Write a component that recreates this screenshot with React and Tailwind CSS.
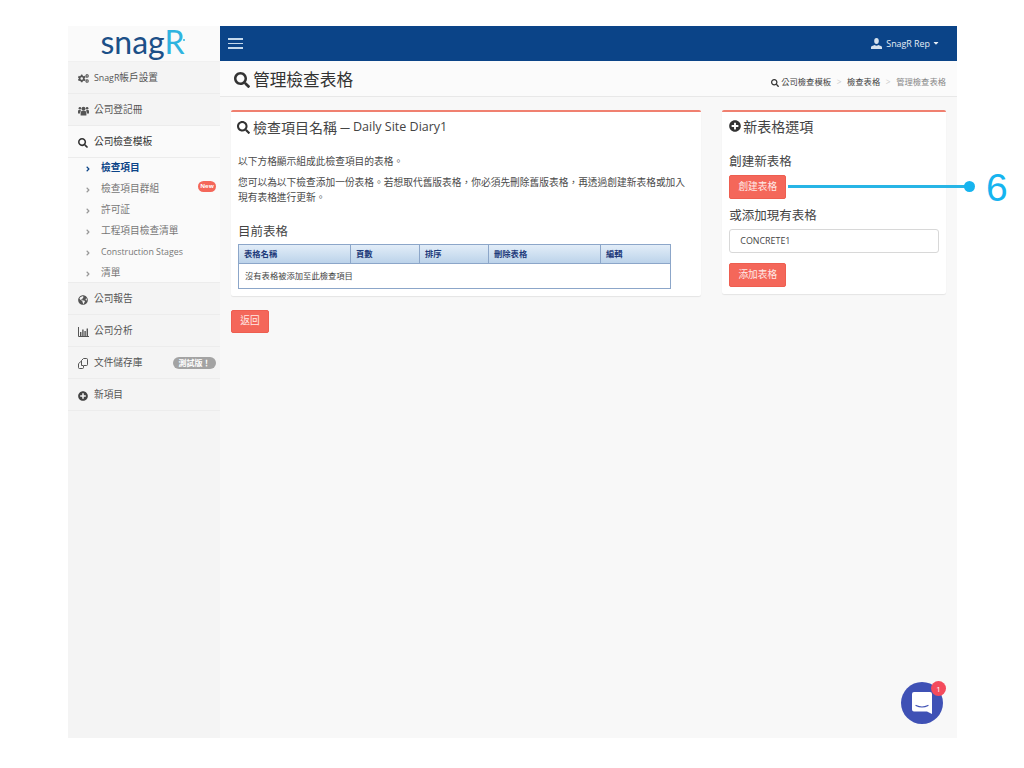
import React from "react";
import { FaCogs, FaSearch, FaGlobeAmericas, FaPlusCircle, FaCaretDown, FaAngleRight } from "react-icons/fa";

const font = { fontFamily: '"Open Sans", "Noto Sans CJK TC", sans-serif' };

const ChartIcon = () => (
  <svg width="11" height="10" viewBox="0 0 11 10" className="text-[#555]">
    <path d="M0.5 0v9.500H11" fill="none" stroke="currentColor" />
    <path d="M2 5h1.400v4H2zM4.200 2.500h1.400V9H4.200zM6.400 4h1.400v5H6.400zM8.600 1.500H10V9H8.600z" fill="currentColor" />
  </svg>
);

const CopyIcon = () => (
  <svg width="10" height="11" viewBox="0 0 10 11" fill="none" stroke="#555" strokeWidth="1">
    <path d="M3.500 3 1 5.200a.8.8 0 0 0-.5.700v3.800c0 .4.300.8.800.8h3.400c.4 0 .8-.4.800-.8V8" />
    <path d="M3.500 7.500V2.500L5.500.5h3.200c.4 0 .8.400.8.800v5.400c0 .4-.4.800-.8.800H6" />
    <path d="M3.500 7.500h2.200" />
  </svg>
);

const UsersIcon = () => (
  <svg width="11" height="10" viewBox="0 0 11 10" fill="#555">
    <circle cx="5.500" cy="2.800" r="2" />
    <path d="M2.600 9.500V6.800c0-1 .8-1.700 1.700-1.700h2.400c.9 0 1.700.7 1.700 1.700v2.700z" />
    <circle cx="1.900" cy="2.300" r="1.300" />
    <circle cx="9.100" cy="2.300" r="1.300" />
    <path d="M0 7.500V5.200c0-.8.500-1.300 1.200-1.300h1.300c.1.500.4.900.8 1.200-.8.300-1.300 1-1.300 1.800v.6z" />
    <path d="M11 7.500V5.200c0-.8-.5-1.300-1.200-1.300H8.500c-.1.500-.4.900-.8 1.200.8.300 1.300 1 1.300 1.800v.6z" />
  </svg>
);

const UserIcon = () => (
  <svg width="11" height="11" viewBox="0 0 11 11" fill="#d6e2ee">
    <ellipse cx="5.500" cy="3" rx="2.300" ry="3" />
    <path d="M0 11V9.300c0-.7.500-1.100 1.100-1.300l2.600-1c.500.500 1.100.8 1.800.8s1.300-.3 1.800-.8l2.600 1c.6.200 1.100.6 1.100 1.300V11z" />
  </svg>
);

const SideRow = ({ icon, label, latin, badge, active }) => (
  <div className={`h-8 flex items-center pt-[2px] pl-[10px] pr-1 border-b border-[#ececec] text-[9.700px] ${active ? "bg-[#fafafa] text-[#333]" : "text-[#555]"}`}>
    <span className="w-[16px] flex justify-start">{icon}</span>
    {latin && <span className="text-[8.800px]">{latin}</span>}
    <span>{label}</span>
    {badge && (
      <span className="ml-auto -mt-[2px] bg-[#a3a3a3] text-white text-[8px] font-bold rounded-full h-[12px] w-[43px] flex items-center justify-center">
        {badge}
      </span>
    )}
  </div>
);

const SubRow = ({ label, latin, active, isNew }) => (
  <div className={`h-[21px] flex items-center pt-[2px] pl-[16px] text-[9.700px] ${active ? "text-[#0b4488] font-bold" : "text-[#777]"}`}>
    <span className="w-[17px]">
      <FaAngleRight size={8} className={active ? "text-[#0b4488]" : "text-[#999]"} />
    </span>
    <span className={latin ? "text-[8.800px]" : ""}>{label}</span>
    {isNew && (
      <span className="ml-auto mr-1 bg-[#f4675a] text-white text-[6px] font-bold rounded-full w-[18px] h-[11px] -mt-[6px] flex items-center justify-center">
        New
      </span>
    )}
  </div>
);

const RedButton = ({ label, className = "" }) => (
  <button className={`bg-[#f4675a] text-[#ffe9e6] text-[9.700px] rounded-[2px] border border-[#ee5e50] flex items-center justify-center ${className}`}>
    {label}
  </button>
);

const columns = [
  { label: "表格名稱", w: "w-[112px]" },
  { label: "頁數", w: "w-[69px]" },
  { label: "排序", w: "w-[69px]" },
  { label: "刪除表格", w: "w-[112px]" },
  { label: "編輯", w: "flex-1" },
];

export default function App() {
  return (
    <div style={font} className="relative w-[1024px] h-[768px] bg-white overflow-hidden pt-[26px] pl-[68px]">
      <div className="w-[889px] h-[712px] flex bg-[#f8f8f8]">
        <aside className="w-[152px] shrink-0 bg-[#f4f4f4]">
          <div className="h-[36px] bg-[#fafafa] flex items-center justify-center pb-[4px] pr-[2px] border-b border-[#f0f0f0]">
            <span className="text-[32px] leading-none text-[#1c5088]" style={{ fontFamily: '"Lato", sans-serif' }}>
              snag<span className="text-[#2fb4e0]">R</span>
            </span>
            <span className="w-[2px] h-[2px] rounded-full bg-[#2fb4e0] -ml-px mb-[3px]" />
          </div>
          <SideRow icon={<FaCogs size={11} color="#555" />} latin="SnagR" label="帳戶設置" />
          <SideRow icon={<UsersIcon />} label="公司登記冊" />
          <div className="border-b border-[#ececec] bg-[#fafafa]">
            <SideRow active icon={<FaSearch size={10} color="#333" />} label="公司檢查模板" />
            <div className="-mt-px h-[125px]">
              <SubRow active label="檢查項目" />
              <SubRow isNew label="檢查項目群組" />
              <SubRow label="許可証" />
              <SubRow label="工程項目檢查清單" />
              <SubRow latin label="Construction Stages" />
              <SubRow label="清單" />
            </div>
          </div>
          <SideRow icon={<FaGlobeAmericas size={10} color="#555" />} label="公司報告" />
          <SideRow icon={<ChartIcon />} label="公司分析" />
          <SideRow icon={<CopyIcon />} label="文件儲存庫" badge="測試版！" />
          <SideRow icon={<FaPlusCircle size={10} color="#444" />} label="新項目" />
        </aside>

        <main className="flex-1 min-w-0">
          <header className="h-[35px] bg-[#0b4488] flex items-center justify-between pl-[8px] pr-[17px]">
            <div className="flex flex-col gap-[3px] w-[15px]">
              <span className="h-[1.500px] bg-[#c5d9ec]" />
              <span className="h-[1.500px] bg-[#c5d9ec]" />
              <span className="h-[1.500px] bg-[#c5d9ec]" />
            </div>
            <div className="flex items-center text-[#e6eef6] text-[8.900px]">
              <UserIcon />
              <span className="ml-[4px]">SnagR Rep</span>
              <FaCaretDown size={8} className="ml-[2px]" />
            </div>
          </header>

          <div className="h-[36px] bg-[#fbfbfb] border-b border-[#e8e8e8] flex items-center justify-between pl-[14px] pr-[11px]">
            <h1 className="flex items-center pt-[3px] text-[16.700px] text-[#333]">
              <FaSearch size={16} color="#333" className="mr-[3px]" />
              管理檢查表格
            </h1>
            <div className="flex items-center pt-[8px] text-[8.300px] text-[#444]">
              <FaSearch size={8} color="#333" className="mr-[2px]" />
              <span>公司檢查模板</span>
              <span className="w-[16px] text-center text-[#ccc]">&gt;</span>
              <span>檢查表格</span>
              <span className="w-[16px] text-center text-[#ccc]">&gt;</span>
              <span className="text-[#888]">管理檢查表格</span>
            </div>
          </div>

          <div className="flex items-start pl-[11px] pt-[13px] pr-[11px]">
            <div className="w-[471px] mr-[21px]">
              <section className="h-[186px] bg-white border-t-2 border-[#f08070] rounded-[2px] shadow-[0_1px_1px_rgba(0,0,0,0.08)] px-[7px]">
                <h2 className="flex items-center h-[29px] pt-[2px] text-[14px] text-[#444]">
                  <FaSearch size={13} color="#333" className="mr-[3px] -ml-px" />
                  檢查項目名稱
                  <span className="w-[16px] text-center text-[10px]">—</span>
                  <span className="text-[12.500px]">Daily Site Diary1</span>
                </h2>
                <p className="mt-[14px] text-[9.720px] leading-[14px] text-[#4a4a4a]">以下方格顯示組成此檢查項目的表格。</p>
                <p className="mt-[6px] text-[9.720px] leading-[15px] text-[#4a4a4a]">
                  您可以為以下檢查添加一份表格。若想取代舊版表格，你必須先刪除舊版表格，再透過創建新表格或加入
                  <br />
                  現有表格進行更新。
                </p>
                <h3 className="mt-[18px] text-[12.500px] leading-[18px] text-[#444]">目前表格</h3>
                <div className="mt-[3px] border border-[#8ca6c9] w-[433px]">
                  <div className="flex h-[19px] bg-gradient-to-b from-[#e2edf8] to-[#bcd3ea] border-b border-[#8ca6c9]">
                    {columns.map((c) => (
                      <div key={c.label} className={`${c.w} border-r last:border-r-0 border-[#8ca6c9] pl-[5px] flex items-center text-[8.300px] text-[#1e3a7a] font-semibold`}>
                        {c.label}
                      </div>
                    ))}
                  </div>
                  <div className="h-[24px] flex items-center pl-[6px] text-[8.300px] text-[#444]">沒有表格被添加至此檢查項目</div>
                </div>
              </section>
              <RedButton label="返回" className="mt-[14px] w-[38px] h-[23px]" />
            </div>

            <section className="w-[224px] h-[184px] bg-white border-t-2 border-[#f08070] rounded-[2px] shadow-[0_1px_1px_rgba(0,0,0,0.08)] px-[7px]">
              <h2 className="flex items-center h-[28px] text-[14px] text-[#444]">
                <FaPlusCircle size={12} color="#333" className="mr-[2px]" />
                新表格選項
              </h2>
              <h3 className="mt-[13px] text-[12.500px] leading-[18px] text-[#444]">創建新表格</h3>
              <RedButton label="創建表格" className="mt-[4px] w-[57px] h-[24px]" />
              <h3 className="mt-[8px] text-[12.500px] leading-[18px] text-[#444]">或添加現有表格</h3>
              <div className="mt-[4px] h-[24px] border border-[#d8d8d8] rounded-[3px] flex items-center pl-[10px] text-[8.900px] text-[#444]">CONCRETE1</div>
              <RedButton label="添加表格" className="mt-[10px] w-[57px] h-[24px]" />
            </section>
          </div>
        </main>
      </div>

      {/* callout */}
      <div className="absolute left-[788px] top-[185px] w-[178px] h-[3px] bg-[#27b5e6]" />
      <div className="absolute left-[964px] top-[181px] w-[11px] h-[11px] rounded-full bg-[#16b4ef]" />
      <div className="absolute left-[986px] top-[166px] text-[39px] leading-[44px] text-[#16b4ef]" style={{ fontFamily: '"Liberation Sans", sans-serif' }}>6</div>

      {/* chat bubble */}
      <div className="absolute left-[901px] top-[682px] w-[42px] h-[42px] rounded-full bg-[#3f51b5] flex items-center justify-center">
        <svg width="20" height="22" viewBox="0 0 20 22">
          <path d="M2 0h16a2 2 0 0 1 2 2v20l-5-2.500H2a2 2 0 0 1-2-2V2a2 2 0 0 1 2-2z" fill="#fff" />
          <path d="M4 13.500q6 3 12 0" fill="none" stroke="#3f51b5" strokeWidth="1.200" strokeLinecap="round" />
        </svg>
      </div>
      <div className="absolute left-[931px] top-[681px] w-[15px] h-[15px] rounded-full bg-[#f44b5c] text-white text-[8px] flex items-center justify-center">1</div>
    </div>
  );
}
